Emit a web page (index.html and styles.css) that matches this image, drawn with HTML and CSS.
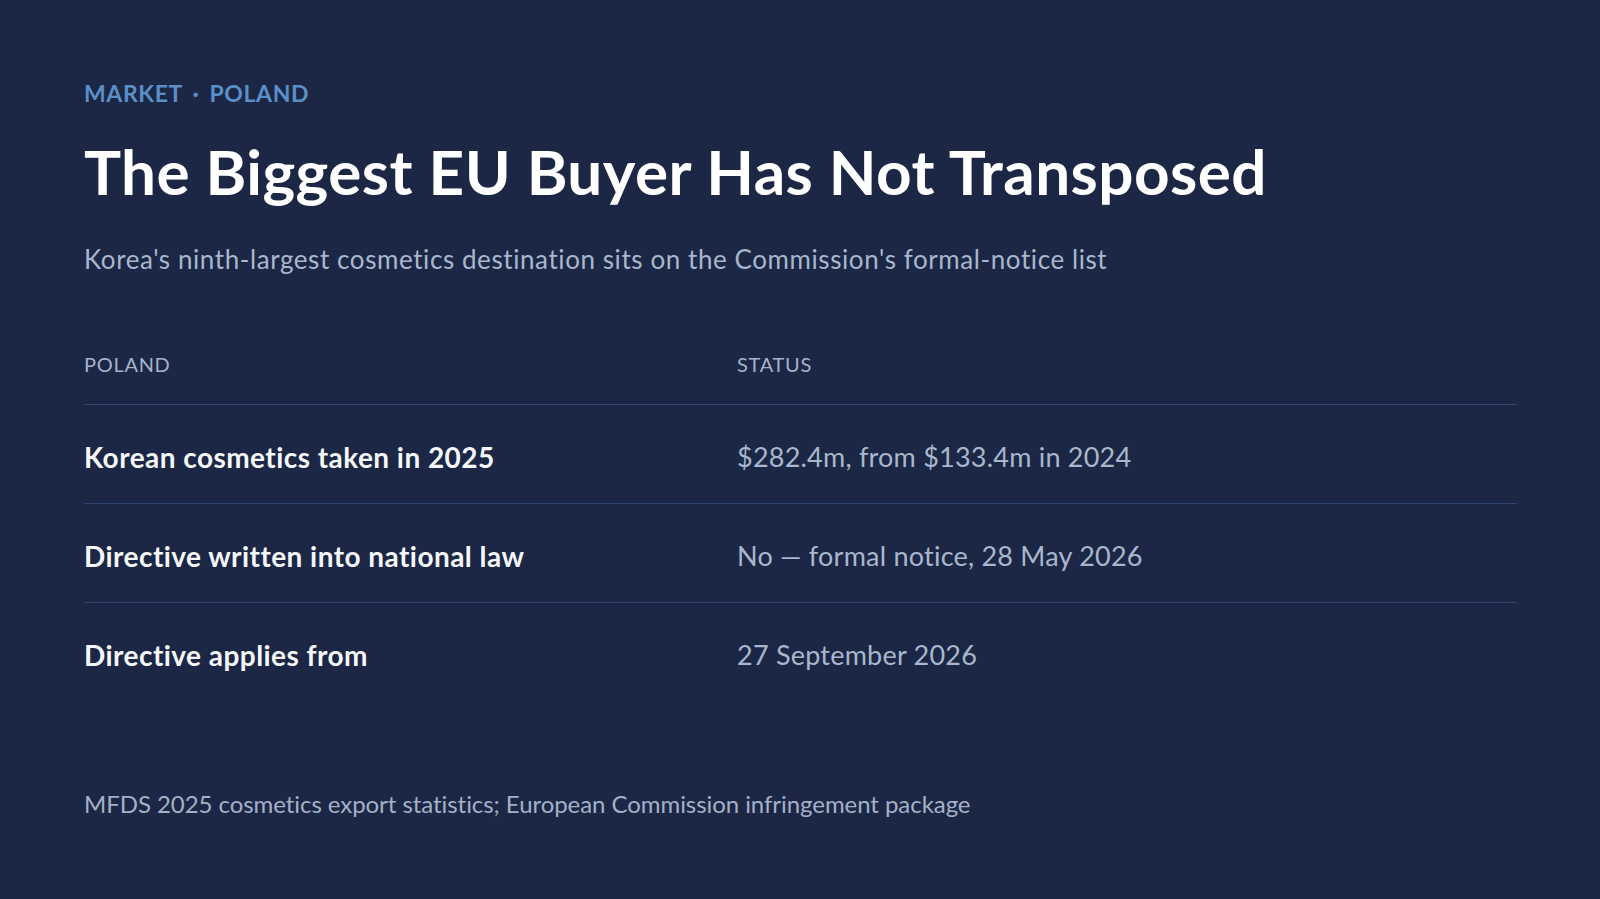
FILE: index.html
```html
<!DOCTYPE html>
<html lang="en">
<head>
<meta charset="utf-8">
<title>The Biggest EU Buyer Has Not Transposed</title>
<link rel="stylesheet" href="styles.css">
</head>
<body>
<main class="page">
  <div class="eyebrow">MARKET <span class="dot">·</span> POLAND</div>
  <h1 class="title">The Biggest EU Buyer Has Not Transposed</h1>
  <p class="subtitle">Korea's ninth-largest cosmetics destination sits on the Commission's formal-notice list</p>

  <div class="table">
    <div class="row head">
      <div class="cell">POLAND</div>
      <div class="cell">STATUS</div>
    </div>
    <div class="row">
      <div class="cell label">Korean cosmetics taken in 2025</div>
      <div class="cell value">$282.4m, from $133.4m in 2024</div>
    </div>
    <div class="row">
      <div class="cell label">Directive written into national law</div>
      <div class="cell value">No — formal notice, 28 May 2026</div>
    </div>
    <div class="row last">
      <div class="cell label">Directive applies from</div>
      <div class="cell value">27 September 2026</div>
    </div>
  </div>

  <p class="source">MFDS 2025 cosmetics export statistics; European Commission infringement package</p>
</main>
</body>
</html>
```
FILE: styles.css
```css
html, body {
  margin: 0;
  padding: 0;
  background: #1b2744;
}
body {
  font-family: Lato, "Noto Sans", sans-serif;
  color: #f5f7fa;
}
.page {
  padding: 78px 83px 0 84px;
  box-sizing: border-box;
  width: 1600px;
  height: 899px;
}
.eyebrow {
  font-size: 23px;
  line-height: 30px;
  font-weight: 700;
  letter-spacing: 0.6px;
  color: #5b8fc8;
}
.eyebrow .dot {
  margin: 0 4px;
}
.title {
  margin: 28px 0 0;
  font-size: 62px;
  line-height: 70px;
  font-weight: 700;
  color: #ffffff;
  letter-spacing: 0.45px;
}
.subtitle {
  margin: 37px 0 0;
  font-size: 26px;
  line-height: 32px;
  font-weight: 400;
  letter-spacing: 0.58px;
  color: #a9b7cd;
}
.table {
  margin-top: 75px;
}
.row {
  display: grid;
  grid-template-columns: 653px 1fr;
  border-bottom: 1px solid #2e4470;
  padding: 34px 0 28px;
}
.row.head {
  padding: 0 0 26px;
}
.row.last {
  border-bottom: none;
}
.head .cell {
  font-size: 20px;
  line-height: 28px;
  letter-spacing: 0.7px;
  color: #a6b3c8;
}
.label {
  font-size: 28px;
  line-height: 36px;
  font-weight: 700;
  letter-spacing: 0.45px;
  color: #f5f7fa;
}
.value {
  font-size: 27px;
  line-height: 36px;
  letter-spacing: 0.22px;
  color: #a9b7cd;
}
.source {
  margin: 88px 0 0;
  font-size: 24px;
  line-height: 30px;
  letter-spacing: -0.06px;
  color: #a3b1c7;
}
```
